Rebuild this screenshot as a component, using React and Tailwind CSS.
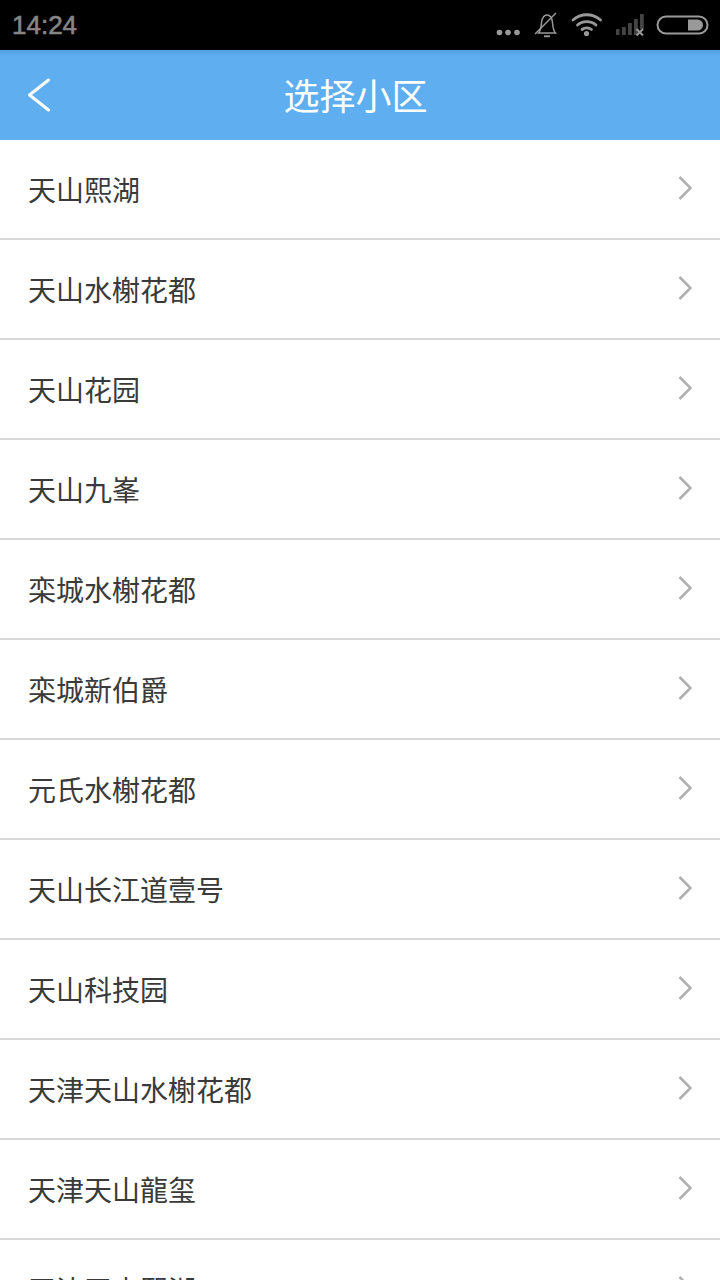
const communities = [
  '天山熙湖',
  '天山水榭花都',
  '天山花园',
  '天山九峯',
  '栾城水榭花都',
  '栾城新伯爵',
  '元氏水榭花都',
  '天山长江道壹号',
  '天山科技园',
  '天津天山水榭花都',
  '天津天山龍玺',
  '天津天山熙湖',
]

function StatusBar() {
  return (
    <div className="h-[50px] bg-black flex items-center justify-between pl-3 shrink-0">
      <span className="text-[26px] leading-none text-[#858585] [-webkit-text-stroke:0.6px_#858585] font-['Liberation_Sans',sans-serif]">14:24</span>
      <svg width="224" height="50" viewBox="0 0 224 50" fill="none">
        <circle cx="3.500" cy="32.500" r="2.800" fill="#999" />
        <circle cx="12" cy="32.500" r="2.800" fill="#999" />
        <circle cx="21" cy="32.500" r="2.800" fill="#999" />
        <path d="M42.500 33c2.500-2.500 2.500-6 3-10.500.6-4 2.500-7.500 5.500-7.500s5 3.500 5.500 7.500c.5 4.500.5 8 3 10.500z" stroke="#999" strokeWidth="1.500" />
        <path d="M48 36.300h6" stroke="#999" strokeWidth="1.800" />
        <path d="M39 34 60 13" stroke="#999" strokeWidth="1.500" />
        <path d="M77 20c7.500-7 20-7 27.500 0M81.500 25c5-4.500 13.500-4.500 18.500 0M86 29.500c2.800-2 6.800-2 9.500 0" stroke="#999" strokeWidth="2.800" strokeLinecap="round" />
        <circle cx="90.500" cy="33.500" r="2.600" fill="#999" />
        <rect x="120" y="29" width="3.500" height="6" rx="0.500" fill="#444" />
        <rect x="126" y="27" width="3.800" height="8" rx="0.500" fill="#444" />
        <rect x="132" y="23" width="3.800" height="12" rx="0.500" fill="#444" />
        <rect x="138" y="19" width="3.800" height="16" rx="0.500" fill="#444" />
        <rect x="144" y="14" width="3.800" height="15" fill="#444" />
        <path d="M140.500 29l6.500 6.500M147 29l-6.500 6.500" stroke="#999" strokeWidth="2" />
        <rect x="161.500" y="16.500" width="50" height="17" rx="8.500" stroke="#999" strokeWidth="2" />
        <path d="M192 19.500h9.500a5.500 5.500 0 0 1 0 11H192z" fill="#999" />
      </svg>
    </div>
  )
}

function Header() {
  return (
    <div className="h-[90px] bg-[#5eaef0] bg-gradient-to-b from-[#559fdc] to-[#5eaef0] to-[6px] flex items-center justify-center relative shrink-0">
      <svg className="absolute left-[27px] top-[28px]" width="24" height="34" viewBox="0 0 24 34" fill="none">
        <path d="M21.500 2 2.500 17l19 15" stroke="#fff" strokeWidth="3" strokeLinecap="round" strokeLinejoin="round" />
      </svg>
      <h1 className="text-[36px] leading-none text-white -ml-[9px] mb-[2px]">选择小区</h1>
    </div>
  )
}

function Row({ name }) {
  return (
    <div className="h-[100px] shrink-0 border-b-2 border-[#d8d8d8] flex items-center justify-between pl-7 pr-[27px]">
      <span className="text-[28px] leading-none text-[#3a3a3a]">{name}</span>
      <svg className="mb-[2px]" width="16" height="26" viewBox="0 0 16 26" fill="none">
        <path d="M2.500 2l11 11-11 11" stroke="#b0b0b0" strokeWidth="2.500" />
      </svg>
    </div>
  )
}

export default function App() {
  return (
    <div className="w-[720px] h-[1280px] overflow-hidden bg-white flex flex-col font-['Noto_Sans_CJK_SC','Noto_Sans',sans-serif]">
      <StatusBar />
      <Header />
      <div className="flex flex-col">
        {communities.map((name) => (
          <Row key={name} name={name} />
        ))}
      </div>
    </div>
  )
}
